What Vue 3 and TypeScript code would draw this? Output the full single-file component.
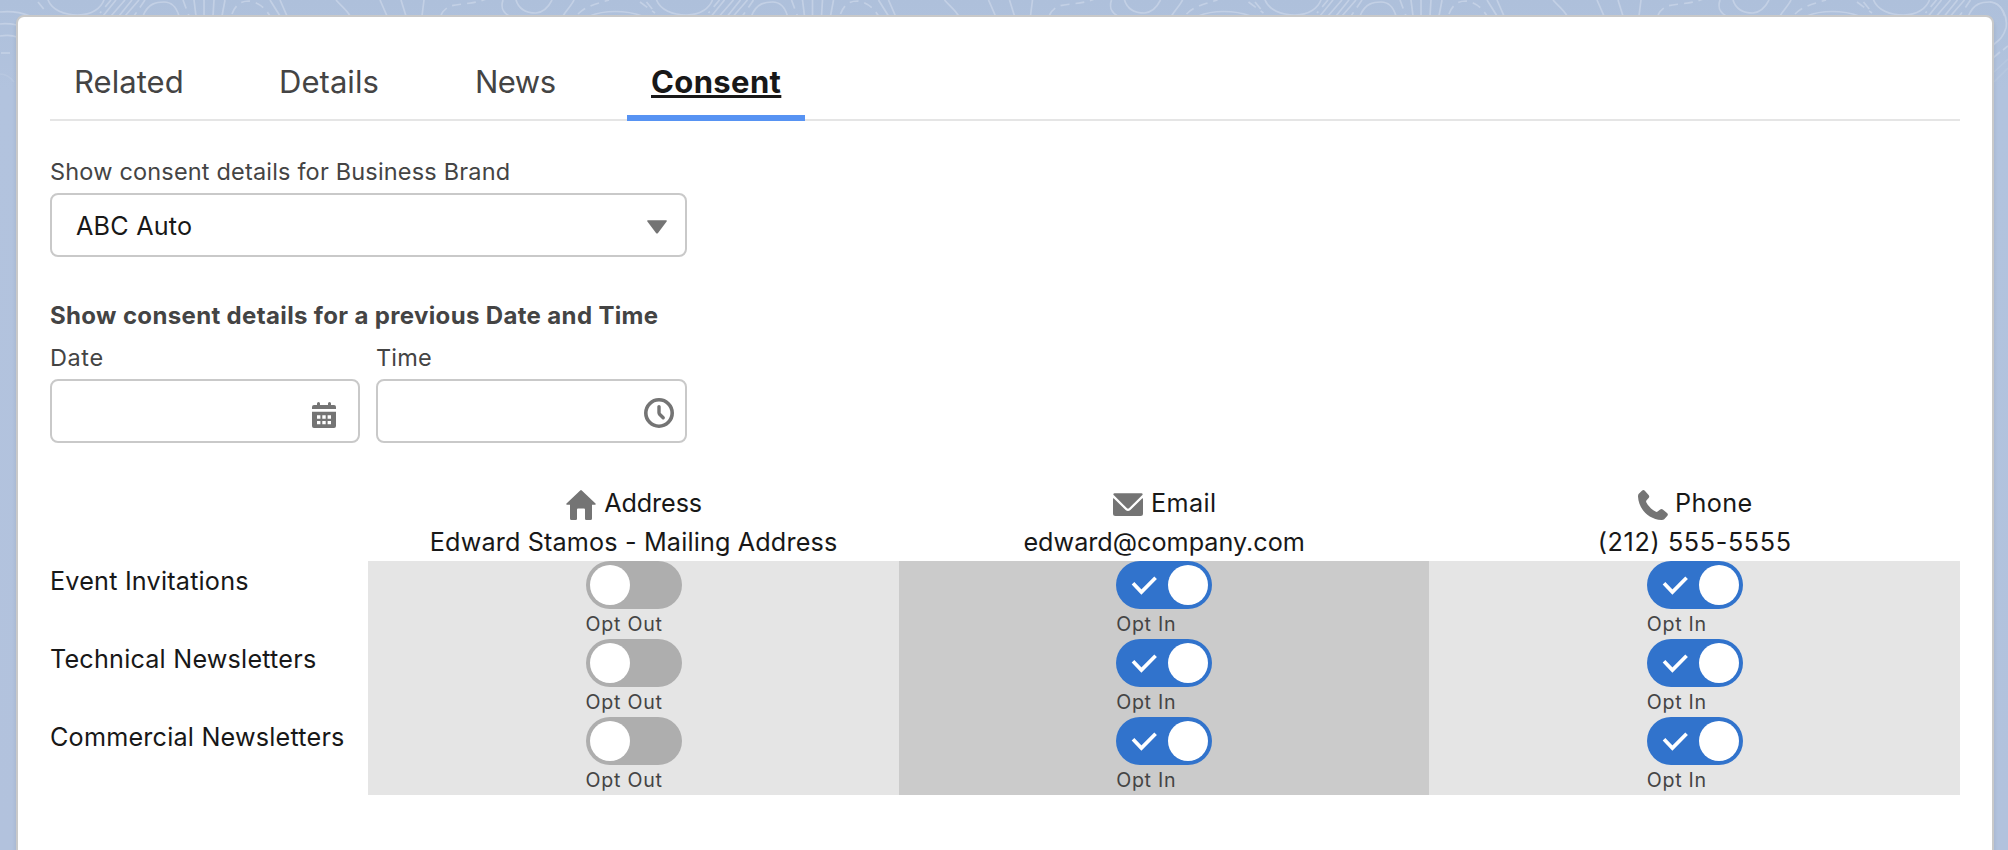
<script setup lang="ts">
import { ref } from 'vue'

interface Tab {
  id: string
  label: string
}

interface Channel {
  id: 'address' | 'email' | 'phone'
  label: string
  value: string
}

interface Purpose {
  label: string
  optIn: boolean[]
}

const tabs: Tab[] = [
  { id: 'related', label: 'Related' },
  { id: 'details', label: 'Details' },
  { id: 'news', label: 'News' },
  { id: 'consent', label: 'Consent' },
]
const activeTab = ref('consent')

const channels: Channel[] = [
  { id: 'address', label: 'Address', value: 'Edward Stamos - Mailing Address' },
  { id: 'email', label: 'Email', value: 'edward@company.com' },
  { id: 'phone', label: 'Phone', value: '(212) 555-5555' },
]

const purposes = ref<Purpose[]>([
  { label: 'Event Invitations', optIn: [false, true, true] },
  { label: 'Technical Newsletters', optIn: [false, true, true] },
  { label: 'Commercial Newsletters', optIn: [false, true, true] },
])

// Horizontal offsets of the repeated contour-line tile
const tileOffsets = [0, 608.5, 1217, 1825.5]
</script>

<template>
  <div class="page">
    <svg class="contours" width="2008" height="110" viewBox="0 0 2008 110" aria-hidden="true">
      <defs>
        <g id="contour-tile">
          <path class="dash" d="M38 2 L47 13" />
          <path d="M48 0 C52 10 64 15 78 15 C92 15 101 8 104 0" />
          <path d="M116 0 L103 16 M125 0 L111 16 M132 0 L119 16 M139 0 L125 16" />
          <path class="dash" d="M111 0 L100 13 M145 0 L134 16" />
          <path d="M143 16 C148 3 157 2 164 2 C173 2 177 9 179 16" />
          <path class="dash" d="M183 0 L189 16" />
          <path d="M194 0 L196 16 M204 0 V16 M214 0 L213 16 M225 0 L222 16" />
          <path class="dash" d="M232 14 C236 3 243 1 249 1 C258 2 265 8 270 16" />
          <path d="M270 0 L280 16 M280 0 L287 16" />
          <path d="M336 0 C341 6 347 10 350 16 M380 0 L387 16 M401 0 L406 16 M424 0 L422 16" />
          <path class="dash" d="M441 15 C446 5 454 5 463 4 C472 3 478 2 486 -1" />
          <path d="M503 0 C500 9 504 13 509 16" />
          <path d="M516 0 C519 10 528 13 536 13 C545 12 549 6 552 0" />
          <path d="M563 16 C567 9 572 5 574 0" />
          <path class="dash" d="M578 14 C586 6 596 4 609 0 M640 2 L655 13" />
          <path d="M590 16 C604 10 626 10 642 16" />
        </g>
      </defs>
      <use v-for="x in tileOffsets" :key="x" href="#contour-tile" :x="x" />
      <path d="M0 12 C9 11 20 12 30 16 M0 24 C7 23 12 24 17 25 M0 36 C6 35 12 35 17 37" />
      <path class="dash" d="M1 53 H10" />
      <path class="faint" d="M0 74 C6 74 11 78 14 82" />
      <path d="M1990 2 C2002 3 2008 17 2006 28 C2003 38 1998 41 1993 45" />
      <path d="M2008 46 L2003 50 M2000 52 L1993 58" />
      <path class="faint" d="M2008 59 L1994 72 M2008 68 L1994 82" />
    </svg>

    <main class="card">
      <nav class="tabs" role="tablist">
        <button
          v-for="tab in tabs"
          :key="tab.id"
          class="tab"
          :class="[`tab-${tab.id}`, { active: tab.id === activeTab }]"
          role="tab"
          type="button"
          @click="activeTab = tab.id"
        >
          {{ tab.label }}
        </button>
      </nav>

      <section class="filters">
        <div class="label brand-label">Show consent details for Business Brand</div>
        <div class="box select">
          <span class="select-value">ABC Auto</span>
          <svg width="20" height="14" viewBox="0 0 20 14"><path d="M.8 .3 H19.2 Q20.2 .5 19.6 1.4 L11 13 Q10 14.2 9 13 L.4 1.4 Q-.2 .5 .8 .3z" /></svg>
        </div>

        <div class="label legend">Show consent details for a previous Date and Time</div>
        <div class="date-time">
          <div class="field">
            <div class="label date-label">Date</div>
            <div class="box date-box">
              <svg width="24" height="26" viewBox="0 0 24 26">
                <path d="M0 7 V5 Q0 3 2 3 H5 V1.5 Q5 0 6.5 0 T8 1.5 V3 H16 V1.5 Q16 0 17.5 0 T19 1.5 V3 H22 Q24 3 24 5 V7z" />
                <path fill-rule="evenodd" d="M0 9.7 H24 V24 Q24 26 22 26 H2 Q0 26 0 24z M5 13.3 V16.7 H8.4 V13.3z M10.3 13.3 V16.7 H13.7 V13.3z M15.6 13.3 V16.7 H19 V13.3z M5 18.9 V22.3 H8.4 V18.9z M10.3 18.9 V22.3 H13.7 V18.9z M15.6 18.9 V22.3 H19 V18.9z" />
              </svg>
            </div>
          </div>
          <div class="field">
            <div class="label time-label">Time</div>
            <div class="box time-box">
              <svg width="30" height="30" viewBox="0 0 30 30">
                <circle class="line" cx="15" cy="15" r="13.2" />
                <path class="line hand" d="M15 8.6 V14.6 Q15 15.6 15.6 16.2 L19.2 19.8" />
              </svg>
            </div>
          </div>
        </div>
      </section>

      <section class="consent">
        <div class="row header">
          <div></div>
          <div v-for="channel in channels" :key="channel.id" class="channel" :class="`channel-${channel.id}`">
            <div class="channel-name">
              <svg width="32" height="32" viewBox="0 0 32 32">
                <path v-if="channel.id === 'address'" d="M15.2 1.4 Q16 .7 16.8 1.4 L30.5 14.6 Q31.2 15.6 30 15.8 H27 V29.5 Q27 31 25.5 31 H21.3 Q20 31 20 29.7 V20.5 Q20 19.5 19 19.5 H13 Q12 19.5 12 20.5 V29.7 Q12 31 10.7 31 H6.5 Q5 31 5 29.5 V15.8 H2 Q.8 15.6 1.5 14.6z" />
                <g v-else-if="channel.id === 'email'">
                  <path d="M2.4 4.2 H29.6 Q31 4.4 30.6 5.8 L17 19.2 Q16 20.1 15 19.2 L1.4 5.8 Q1 4.4 2.4 4.2z" />
                  <path d="M1 9.8 Q1 8.7 1.9 9.5 L13.6 20.9 Q16 22.9 18.4 20.9 L30.1 9.5 Q31 8.7 31 9.8 V24.5 Q31 27 28.5 27 H3.5 Q1 27 1 24.5z" />
                </g>
                <path v-else d="M5.2 1.6 Q6.5 .6 7.8 1.7 L11.8 6.2 Q12.8 7.6 11.6 9 L9.4 11.4 Q8.8 12.3 9.4 13.5 C11.5 17.3 14.7 20.5 18.5 22.6 Q19.7 23.2 20.6 22.6 L23.2 20.4 Q24.5 19.5 25.8 20.4 L30.3 24.2 Q31.4 25.5 30.4 26.8 L27.2 30.2 Q26.1 31.1 24.5 31 C11.7 30.3 1.7 20.3 1 7.5 Q.9 5.9 1.8 4.8z" />
              </svg>
              <span>{{ channel.label }}</span>
            </div>
            <div class="channel-value">{{ channel.value }}</div>
          </div>
        </div>

        <div v-for="purpose in purposes" :key="purpose.label" class="row">
          <div class="purpose">{{ purpose.label }}</div>
          <div v-for="(on, i) in purpose.optIn" :key="i" class="cell">
            <div class="toggle" @click="purpose.optIn[i] = !on">
              <div class="track" :class="{ on }">
                <svg v-if="on" class="check" width="36" height="48" viewBox="0 0 36 48"><path d="M13 22.3 L21.4 31 L35.6 16.8" /></svg>
                <span class="knob"></span>
              </div>
              <div class="state">{{ on ? 'Opt In' : 'Opt Out' }}</div>
            </div>
          </div>
        </div>
      </section>
    </main>
  </div>
</template>

<style>
body {
  margin: 0;
  overflow: hidden;
}
</style>

<style scoped>
.page {
  position: relative;
  box-sizing: border-box;
  height: 850px;
  padding: 15px 14px 0 16px;
  overflow: hidden;
  background: linear-gradient(#aec0db 0, #b2c3de 90px, #b2c2dd 100%);
  color: #181818;
  font-family: Inter, "Liberation Sans", sans-serif;
  font-size: 25.2px;
  line-height: 39px;
  white-space: nowrap;
}

.contours {
  position: absolute;
  top: 0;
  left: 0;
  fill: none;
  stroke: #c3d0e5;
  stroke-width: 1.7;
}

.dash {
  stroke-dasharray: 9 6;
}

.faint {
  opacity: 0.35;
}

.card {
  position: relative;
  box-sizing: border-box;
  height: 860px;
  padding: 24px 32px 0;
  border: 2px solid #c9c9c9;
  border-radius: 8px;
  background: #fff;
  box-shadow: 0 4px 4px rgba(0, 0, 0, 0.1);
}

.tabs {
  display: flex;
  gap: 48px;
  height: 80px;
  box-shadow: inset 0 -2px #e5e5e5;
}

.tab {
  box-sizing: border-box;
  height: 80px;
  padding: 1px 0 0 24px;
  border: 0;
  background: none;
  color: #444;
  font: 400 31px/79px Inter, "Liberation Sans", sans-serif;
  letter-spacing: 0.05px;
  text-align: left;
}

.tab-related {
  width: 157px;
}

.tab-details {
  width: 148px;
}

.tab-news {
  width: 128px;
  letter-spacing: -0.5px;
}

.tab-consent {
  width: 178px;
}

.tab.active {
  box-shadow: inset 0 -6px #5793f3;
  color: #181818;
  font-weight: 700;
  letter-spacing: 0.37px;
  text-decoration: underline;
  text-decoration-thickness: 3px;
  text-underline-offset: 2px;
  text-decoration-skip-ink: none;
}

.filters {
  width: 637px;
  padding-top: 33px;
}

.label {
  height: 39px;
  color: #444;
  font-size: 23.5px;
  line-height: 36px;
}

.brand-label {
  letter-spacing: 0.18px;
}

.box {
  display: flex;
  box-sizing: border-box;
  height: 64px;
  border: 2px solid #c9c9c9;
  border-radius: 8px;
  background: #fff;
  fill: #747474;
}

.select {
  align-items: center;
  justify-content: space-between;
  padding: 0 18px 0 24px;
}

.select-value {
  padding-top: 2px;
  letter-spacing: 0.2px;
}

.select svg {
  margin-top: 3px;
}

.legend {
  height: 42px;
  margin-top: 41px;
  font-size: 24px;
  font-weight: 700;
  letter-spacing: 0.35px;
}

.date-time {
  display: grid;
  grid-template-columns: 310px 311px;
  gap: 16px;
}

.date-label {
  letter-spacing: 0.6px;
}

.time-label {
  letter-spacing: 0.2px;
}

.date-box {
  justify-content: flex-end;
  padding: 21px 22px 0 0;
}

.time-box {
  justify-content: flex-end;
  padding: 17px 11px 0 0;
}

.line {
  fill: none;
  stroke: #747474;
  stroke-width: 3.6;
}

.hand {
  stroke-width: 3.4;
  stroke-linecap: round;
}

.consent {
  margin-top: 40px;
}

.row {
  display: grid;
  grid-template-columns: 318.33px repeat(3, 1fr);
  height: 78px;
}

.channel {
  padding-top: 1px;
  text-align: center;
}

.channel-name {
  display: flex;
  justify-content: center;
  gap: 7px;
  height: 39px;
}

.channel-name svg {
  margin-top: 5px;
  fill: #747474;
}

.channel-address .channel-name {
  letter-spacing: -0.1px;
}

.channel-address .channel-value {
  letter-spacing: 0.15px;
}

.channel-email .channel-name {
  letter-spacing: 0.4px;
}

.channel-phone .channel-name {
  gap: 6px;
  letter-spacing: 0.4px;
}

.channel-phone .channel-value {
  letter-spacing: 0.62px;
}

.purpose {
  padding-top: 1px;
  letter-spacing: 0.2px;
}

.cell {
  display: flex;
  justify-content: center;
  background: #e5e5e5;
}

.cell:nth-child(3) {
  background: #cbcbcb;
}

.toggle {
  width: 96px;
}

.track {
  display: flex;
  box-sizing: border-box;
  height: 48px;
  padding: 4px;
  border-radius: 24px;
  background: #aeaeae;
}

.track.on {
  justify-content: flex-end;
  background: #3173cc;
}

.check {
  margin: -4px 12px 0 0;
  overflow: visible;
  fill: none;
  stroke: #fff;
  stroke-width: 3.7;
}

.knob {
  width: 40px;
  height: 40px;
  border-radius: 50%;
  background: #fff;
}

.state {
  color: #444;
  font-size: 19.6px;
  line-height: 30px;
  letter-spacing: 0.74px;
}
</style>
